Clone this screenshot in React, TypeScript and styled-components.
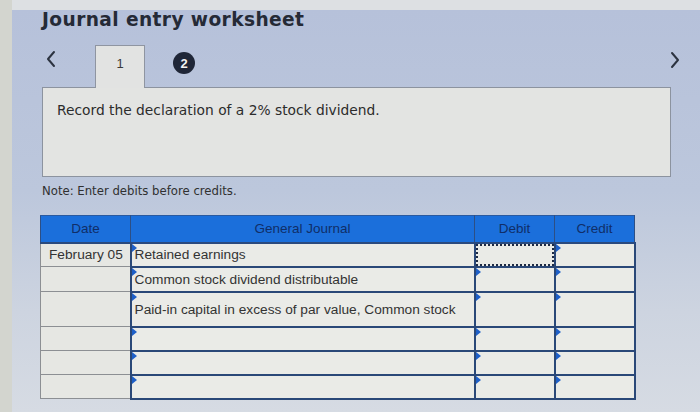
import React from "react";
import styled, { createGlobalStyle } from "styled-components";

const Global = createGlobalStyle`
  html, body { margin: 0; padding: 0; }
  body { width: 700px; height: 412px; overflow: hidden; background: #d3d5cf; font-family: "Liberation Sans", Arial, sans-serif; }
`;

const Screen = styled.div`
  width: 700px;
  height: 412px;
  display: flex;
  flex-direction: column;
`;

const TopStrip = styled.div`
  height: 10px;
  background: #dde0e3;
  margin-left: 12px;
`;

const Panel = styled.div`
  flex: 1;
  margin-left: 12px;
  background: linear-gradient(180deg, #b6c1da 0%, #bcc7dc 45%, #cdd4e0 75%, #d6dbe3 100%);
  padding: 0 0 0 30px;
  display: flex;
  flex-direction: column;
  position: relative;
`;

const Title = styled.h1`
  margin: 0;
  height: 30px;
  font-family: "DejaVu Sans", Verdana, sans-serif;
  font-weight: bold;
  font-size: 18.6px;
  line-height: 19px;
  color: #252a36;
  letter-spacing: 0.4px;
`;

const NavRow = styled.div`
  height: 42px;
  margin-top: 5px;
  display: flex;
  align-items: stretch;
  width: 630px;
  position: relative;
  z-index: 2;
`;

const Chevron = styled.div`
  width: 16px;
  display: flex;
  align-items: center;
  justify-content: center;
  margin-left: 1px;
  padding-bottom: 14px;
`;

const Tab = styled.div`
  margin-left: 36px;
  width: 50px;
  height: 43px;
  box-sizing: border-box;
  background: #e2e3e2;
  border: 1px solid #8f95a1;
  border-bottom: none;
  display: flex;
  justify-content: center;
  padding-top: 10px;
  font-family: "Liberation Sans", Arial, sans-serif;
  font-size: 13px;
  color: #3a3a3a;
`;

const Dot = styled.div`
  margin-left: 28px;
  margin-top: 7px;
  width: 22px;
  height: 22px;
  border-radius: 50%;
  background: #1f2637;
  color: #f2f2f2;
  display: flex;
  align-items: center;
  justify-content: center;
  font-family: "Liberation Sans", Arial, sans-serif;
  font-size: 13px;
  font-weight: bold;
`;

const NextChevron = styled.div`
  position: absolute;
  left: 627px;
  top: 6px;
  width: 14px;
  height: 20px;
`;

const Prompt = styled.div`
  width: 629px;
  height: 90px;
  box-sizing: border-box;
  background: #e3e4e2;
  border: 1px solid #8c939f;
  padding: 14px 0 0 14px;
  font-family: "DejaVu Sans", Verdana, sans-serif;
  font-size: 13.8px;
  color: #2c2c2c;
`;

const Note = styled.div`
  margin-top: 6px;
  height: 32px;
  font-family: "DejaVu Sans", Verdana, sans-serif;
  font-size: 11.7px;
  color: #303030;
  line-height: 16px;
`;

const Table = styled.table`
  border-collapse: collapse;
  table-layout: fixed;
  width: 594px;
  margin-left: -2px;
  font-family: "Liberation Sans", Arial, sans-serif;
  font-size: 13.7px;
  color: #333;
`;

const Th = styled.th<{ $w: number }>`
  width: ${(p) => p.$w}px;
  height: 27px;
  box-sizing: border-box;
  background: #1b6fdb;
  color: #102e68;
  font-weight: normal;
  font-size: 13.5px;
  text-align: center;
  padding: 0;
  border-top: 1px solid #2a5aa0;
  border-left: 1px solid #2d4f85;
  border-right: 1px solid #2d4f85;
  border-bottom: 2px solid #2a4a7e;
`;

const DateTd = styled.td<{ $h: number }>`
  height: ${(p) => p.$h}px;
  box-sizing: border-box;
  background: #e6e7e3;
  border: 1px solid #8c8f93;
  border-right: 2px solid #2a4878;
  padding: 0 0 0 8px;
  white-space: nowrap;
  vertical-align: middle;
`;

const Cell = styled.td<{ $h: number; $focus?: boolean }>`
  height: ${(p) => p.$h}px;
  box-sizing: border-box;
  background: #eaebe7;
  border: 2px solid #2a4878;
  padding: 0 0 0 3px;
  position: relative;
  white-space: nowrap;
  vertical-align: middle;
  outline: ${(p) => (p.$focus ? "2px dotted #1e2a44" : "none")};
  outline-offset: -3px;
`;

const Marker = styled.span`
  position: absolute;
  left: 0;
  top: 0;
  width: 0;
  height: 0;
  border-top: 4px solid transparent;
  border-bottom: 4px solid transparent;
  border-left: 5px solid #1d5fc8;
`;

const rows = [
  { date: "February 05", account: "Retained earnings", h: 24 },
  { date: "", account: "Common stock dividend distributable", h: 25 },
  { date: "", account: "Paid-in capital in excess of par value, Common stock", h: 35 },
  { date: "", account: "", h: 24 },
  { date: "", account: "", h: 24 },
  { date: "", account: "", h: 24 },
];

const ChevronSvg = ({ dir }: { dir: "left" | "right" }) => (
  <svg width="12" height="18" viewBox="0 0 12 18">
    <polyline
      points={dir === "left" ? "9,2 3,9 9,16" : "3,2 9,9 3,16"}
      fill="none"
      stroke="#2c3340"
      strokeWidth="2"
      strokeLinecap="round"
      strokeLinejoin="round"
    />
  </svg>
);

export default function App() {
  return (
    <Screen>
      <Global />
      <TopStrip />
      <Panel>
        <Title>Journal entry worksheet</Title>
        <NavRow>
          <Chevron>
            <ChevronSvg dir="left" />
          </Chevron>
          <Tab>1</Tab>
          <Dot>2</Dot>
          <NextChevron>
            <ChevronSvg dir="right" />
          </NextChevron>
        </NavRow>
        <Prompt>Record the declaration of a 2% stock dividend.</Prompt>
        <Note>Note: Enter debits before credits.</Note>
        <Table>
          <thead>
            <tr>
              <Th $w={90}>Date</Th>
              <Th $w={344}>General Journal</Th>
              <Th $w={80}>Debit</Th>
              <Th $w={80}>Credit</Th>
            </tr>
          </thead>
          <tbody>
            {rows.map((r, i) => (
              <tr key={i}>
                <DateTd $h={r.h}>{r.date}</DateTd>
                <Cell $h={r.h}>
                  <Marker />
                  {r.account}
                </Cell>
                <Cell $h={r.h} $focus={i === 0}>
                  {i !== 0 && <Marker />}
                </Cell>
                <Cell $h={r.h}>
                  <Marker />
                </Cell>
              </tr>
            ))}
          </tbody>
        </Table>
      </Panel>
    </Screen>
  );
}
